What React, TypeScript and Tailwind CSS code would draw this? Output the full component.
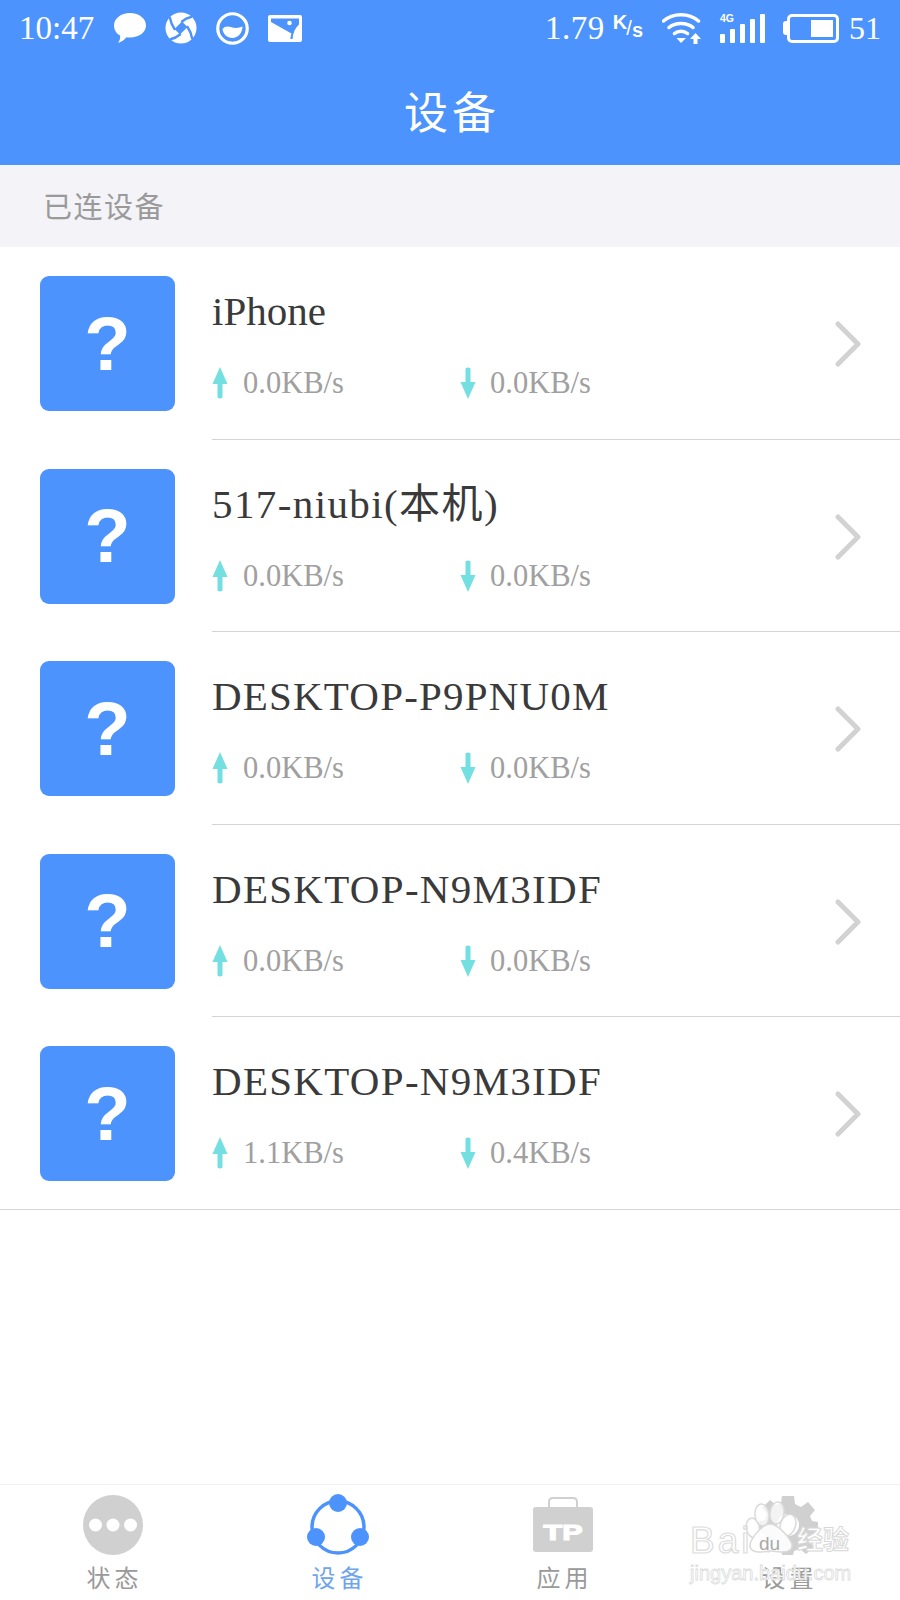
import React from "react";

const SERIF = "font-['Liberation_Serif','Noto_Sans_CJK_SC',serif]";

function UpArrow() {
  return (
    <svg width="16" height="32" viewBox="0 0 16 32" className="shrink-0">
      <path d="M8 0 L15.5 17 L10.500 17 L10.500 30.500 Q8 32.500 5.500 30.500 L5.500 17 L0.500 17 Z" fill="#74dfe0" />
    </svg>
  );
}
function DownArrow() {
  return (
    <svg width="16" height="32" viewBox="0 0 16 32" className="shrink-0">
      <path d="M8 32 L15.5 15 L10.500 15 L10.500 1.500 Q8 -0.500 5.500 1.500 L5.500 15 L0.500 15 Z" fill="#74dfe0" />
    </svg>
  );
}

function Row({ name, up, down, last, track }: { name: string; up: string; down: string; last?: boolean; track: string }) {
  return (
    <div className="relative flex h-[192.5px] items-start pl-[40px]">
      <div className="mt-[29px] flex h-[135px] w-[135px] shrink-0 items-center justify-center rounded-[9px] bg-[#4c93fd]">
        <span className="font-['Liberation_Sans',sans-serif] text-[76px] leading-none font-bold text-white">?</span>
      </div>
      <div className={`ml-[37px] flex h-full flex-1 flex-col ${last ? "" : "border-b border-[#d4d4d4]"}`}>
        <div className={`${SERIF} mt-[41px] h-[47px] text-[41px] leading-[47px] text-[#3a3a3a] ${track}`}>{name}</div>
        <div className="mt-[32px] flex items-center">
          <div className="flex w-[248px] items-center">
            <UpArrow />
            <span className={`${SERIF} ml-[15px] text-[30.5px] leading-[32px] text-[#a0a0a0]`}>{up}</span>
          </div>
          <div className="flex items-center">
            <DownArrow />
            <span className={`${SERIF} ml-[14px] text-[30.5px] leading-[32px] text-[#a0a0a0]`}>{down}</span>
          </div>
        </div>
      </div>
      <svg width="28" height="46" viewBox="0 0 28 46" className="absolute top-[74px] right-[37px]">
        <path d="M3 3 L23 23 L3 43" fill="none" stroke="#d2d2d2" strokeWidth="5" strokeLinecap="round" strokeLinejoin="round" />
      </svg>
      {last && <div className="absolute right-0 bottom-0 left-0 h-px bg-[#d4d4d4]" />}
    </div>
  );
}

function StatusBar() {
  return (
    <div className={`${SERIF} flex h-[56px] items-center justify-between text-white`}>
      <div className="flex items-center pl-[19px]">
        <span className="text-[33px] leading-none">10:47</span>
        <svg width="34" height="32" viewBox="0 0 34 32" className="ml-[19px]">
          <path d="M17 1 C26 1 33 6.500 33 13.500 C33 20.500 26 25.500 17 25.500 C15.500 25.500 14.500 25.500 13.500 25.300 C11 28.500 8 30 5 31 C6.800 28.500 7.500 26 7 23.500 C3 21.300 1 18 1 13.500 C1 6.500 8 1 17 1 Z" fill="#fff" />
        </svg>
        <svg width="32" height="32" viewBox="0 0 32 32" className="ml-[18px]">
          <circle cx="16" cy="16" r="15.500" fill="#fff" />
          <path d="M17 9.500 L22.500 15 L15 22.500 L9.500 17 Z" fill="#4c93fd" />
          <path d="M17 9.500 Q21 6 26 5 M22.500 15 Q26 20 27 26 M15 22.500 Q11 26 6 27 M9.500 17 Q6 12 5 6" fill="none" stroke="#4c93fd" strokeWidth="2.400" strokeLinecap="round" />
        </svg>
        <svg width="33" height="33" viewBox="0 0 33 33" className="ml-[19px]">
          <circle cx="16.500" cy="16.500" r="14.750" fill="none" stroke="#fff" strokeWidth="3.200" />
          <path d="M6.500 17 C8.500 14 12 14 15 15 C19 16.500 23 16 26.500 14.500 C26.500 21 22 26 16.500 26 C11 26 7 22 6.500 17 Z" fill="#fff" />
        </svg>
        <svg width="34" height="27" viewBox="0 0 34 27" className="ml-[19px]">
          <rect width="34" height="27" rx="2" fill="#fff" />
          <path d="M3 3.500 L31 3.500 L31 9.500 C27 13 25 18 24.500 24 L22.500 24 C22.500 21.500 23 20 23.500 18.500 L3 7 Z" fill="#4c93fd" />
          <circle cx="21.500" cy="8" r="2.300" fill="#fff" />
        </svg>
      </div>
      <div className="flex items-center pr-[19px]">
        <span className="text-[33px] leading-none tracking-[0.5px]">1.79</span>
        <span className="ml-[8px] flex items-baseline font-['Liberation_Sans',sans-serif] text-[20px] leading-none font-bold">
          <span className="-translate-y-[6px]">K</span>
          <span className="-ml-[1px] font-normal">/</span>
          <span className="translate-y-[2px]">s</span>
        </span>
        <svg width="40" height="32" viewBox="0 0 40 32" className="ml-[19px]">
          <path d="M1.500 9 C11 0.500 27 0.500 36.500 9 M7 15.500 C13 10 25 10 31 15.500 M12.500 21.500 C16 18.500 22 18.500 25.500 21.500" fill="none" stroke="#fff" strokeWidth="3.500" strokeLinecap="round" />
          <path d="M14.500 26 L24 26 L19 31 Z" fill="#fff" />
          <path d="M33.500 21 L39 27 L35.500 27 L35.500 32 L31.500 32 L31.500 27 L28 27 Z" fill="#fff" />
        </svg>
        <div className="relative ml-[18px] flex h-[29px] w-[46px] items-end gap-[5px]">
          <span className="absolute top-[-1px] left-0 font-['Liberation_Sans',sans-serif] text-[10.5px] leading-none font-bold">4G</span>
          <span className="h-[9px] w-[5px] rounded-[1px] bg-white" />
          <span className="h-[14px] w-[5px] rounded-[1px] bg-white" />
          <span className="h-[19px] w-[5px] rounded-[1px] bg-white" />
          <span className="h-[24px] w-[5px] rounded-[1px] bg-white" />
          <span className="h-[29px] w-[5px] rounded-[1px] bg-white" />
        </div>
        <div className="ml-[17px] flex items-center">
          <span className="h-[14px] w-[4px] rounded-l-[3px] bg-white" />
          <div className="flex h-[29px] w-[52px] justify-end rounded-[5px] border-[3px] border-white p-[3px]">
            <span className="h-full w-[22px] bg-white" />
          </div>
        </div>
        <span className="ml-[10px] text-[32px] leading-none">51</span>
      </div>
    </div>
  );
}

function NavItem({ label, active, children }: { label: string; active?: boolean; children: React.ReactNode }) {
  return (
    <div className="flex w-[226px] flex-col items-center">
      <div className="flex h-[62px] items-center justify-center">{children}</div>
      <span className={`${SERIF} mt-[9px] pl-[4px] text-[24px] leading-[28px] tracking-[4px] ${active ? "text-[#6fa5ec]" : "text-[#9a9a9a]"}`}>
        {label}
      </span>
    </div>
  );
}

function Watermark() {
  return (
    <div className="pointer-events-none absolute top-[1498px] left-[690px] h-[92px] w-[170px]">
      <svg width="64" height="60" viewBox="0 0 64 60" className="absolute top-[0px] left-[50px]">
        <g fill="#fff" fillOpacity="0.75" stroke="#dadada" strokeWidth="1.500">
          <ellipse cx="13" cy="30" rx="6.500" ry="10" transform="rotate(-12 13 30)" />
          <ellipse cx="22" cy="17" rx="7" ry="11" transform="rotate(-6 22 17)" />
          <ellipse cx="37" cy="15" rx="7" ry="11" transform="rotate(8 37 15)" />
          <ellipse cx="48" cy="27" rx="7.500" ry="11" transform="rotate(18 48 27)" />
          <path d="M30 26 C38 26 53 42 52 49 C50 56 38 54 31 53 C24 54 12 56 10 49 C9 42 22 26 30 26 Z" fill="#fff" fillOpacity="0.9" />
        </g>
      </svg>
      <span className="absolute top-[21px] left-0 font-['Liberation_Sans',sans-serif] text-[37px] leading-[44px] tracking-[3px] text-transparent [-webkit-text-stroke:1.2px_#dcdcdc]">Bai</span>
      <span className="absolute top-[35px] left-[69px] font-['Liberation_Sans',sans-serif] text-[19px] leading-[22px] text-[#a8a8a8]">du</span>
      <span className="absolute top-[24px] left-[107px] font-['Noto_Sans_CJK_SC',sans-serif] text-[26px] leading-[32px] font-bold text-white [-webkit-text-stroke:1px_#d8d8d8]">经验</span>
      <span className="absolute top-[62px] left-0 font-['Liberation_Sans',sans-serif] text-[20px] leading-[26px] text-white [-webkit-text-stroke:0.8px_#dcdcdc]">jingyan.baidu.com</span>
    </div>
  );
}

export default function App() {
  const rows = [
    { name: "iPhone", up: "0.0KB/s", down: "0.0KB/s", track: "tracking-normal" },
    { name: "517-niubi(本机)", up: "0.0KB/s", down: "0.0KB/s", track: "tracking-[1.4px]" },
    { name: "DESKTOP-P9PNU0M", up: "0.0KB/s", down: "0.0KB/s", track: "tracking-[1.2px]" },
    { name: "DESKTOP-N9M3IDF", up: "0.0KB/s", down: "0.0KB/s", track: "tracking-[1.3px]" },
    { name: "DESKTOP-N9M3IDF", up: "1.1KB/s", down: "0.4KB/s", last: true, track: "tracking-[1.3px]" },
  ];
  return (
    <div className="relative flex h-[1600px] w-[900px] flex-col overflow-hidden bg-white">
      <header className="h-[165px] shrink-0 bg-[#4c93fd]">
        <StatusBar />
        <div className={`${SERIF} mt-[32px] pl-[4px] text-center text-[44px] leading-[54px] tracking-[4px] text-white`}>设备</div>
      </header>
      <div className={`${SERIF} flex h-[82px] shrink-0 items-center bg-[#f3f3f8] pt-[5px] pl-[43px] text-[29px] tracking-[1.500px] text-[#9a9a9a]`}>
        已连设备
      </div>
      <main className="flex-1">
        {rows.map((r, i) => (
          <Row key={i} {...r} />
        ))}
      </main>
      <nav className="flex h-[116px] shrink-0 justify-between border-t border-[#f0f0f0] pt-[9px]">
        <NavItem label="状态">
          <svg width="60" height="60" viewBox="0 0 60 60">
            <circle cx="30" cy="30" r="30" fill="#d0d0d0" />
            <circle cx="12.500" cy="30" r="6.500" fill="#fff" />
            <circle cx="30" cy="30" r="6.500" fill="#fff" />
            <circle cx="47.500" cy="30" r="6.500" fill="#fff" />
          </svg>
        </NavItem>
        <NavItem label="设备" active>
          <svg width="62" height="62" viewBox="0 0 62 62">
            <circle cx="31" cy="33" r="26" fill="none" stroke="#4c93fd" strokeWidth="3.500" />
            <circle cx="31" cy="9" r="9" fill="#4c93fd" />
            <circle cx="9" cy="43" r="9" fill="#4c93fd" />
            <circle cx="53" cy="43" r="9" fill="#4c93fd" />
          </svg>
        </NavItem>
        <NavItem label="应用">
          <svg width="60" height="56" viewBox="0 0 60 56">
            <path d="M16 11 L16 5 Q16 1 20 1 L40 1 Q44 1 44 5 L44 11" fill="none" stroke="#d0d0d0" strokeWidth="2" />
            <rect x="0" y="10" width="60" height="45" rx="3" fill="#d0d0d0" />
            <text x="10.500" y="43" textLength="39" lengthAdjust="spacingAndGlyphs" fill="#fff" fontFamily="Liberation Sans" fontWeight="900" fontSize="22" stroke="#fff" strokeWidth="1.200">TP</text>
          </svg>
        </NavItem>
        <NavItem label="设置">
          <svg width="60" height="60" viewBox="0 0 60 60">
            <path d="M24 1 L36 1 L37 9 L43 12 L50 7 L57 15 L52 21 L54 26 L60 27 L60 39 L53 40 L51 46 L56 52 L48 59 L42 54 L36 56 L35 60 L24 60 L23 55 L17 52 L10 58 L3 50 L8 44 L6 38 L0 37 L0 26 L7 25 L9 19 L4 13 L12 5 L18 10 L23 8 Z" fill="#d0d0d0" />
            <circle cx="30" cy="30" r="11" fill="#fff" />
          </svg>
        </NavItem>
      </nav>
      <Watermark />
    </div>
  );
}
